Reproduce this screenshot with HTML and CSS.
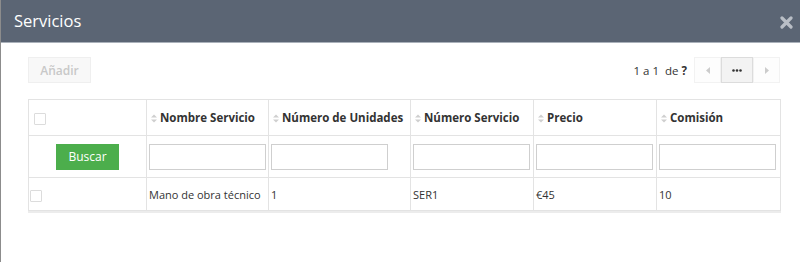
FILE: index.html
```html
<!DOCTYPE html>
<html lang="es">
<head>
    <meta charset="UTF-8">
    <title>Servicios</title>
    <link rel="stylesheet" href="styles.css">
</head>
<body>
<div class="modal-header">
    <h3>Servicios</h3>
    <span class="close-btn">
        <svg width="13" height="13" viewBox="0 0 13 13"><path d="M2 2 L11 11 M11 2 L2 11" stroke="#b9bec6" stroke-width="3.2" stroke-linecap="round"/></svg>
    </span>
</div>

<div class="modal-body">
    <div class="toolbar">
        <button class="add-btn">Añadir</button>
        <div class="pager">
            <span class="pager-info">1 a 1 &nbsp;de <b>?</b></span>
            <button class="pg pg-side">
                <svg width="4" height="7" viewBox="0 0 4 7"><path d="M4 0 L0 3.5 L4 7 Z" fill="#ccc"/></svg>
            </button>
            <button class="pg pg-mid">
                <svg width="10" height="3" viewBox="0 0 10 3"><circle cx="1.5" cy="1.5" r="1.3" fill="#333"/><circle cx="5" cy="1.5" r="1.3" fill="#333"/><circle cx="8.5" cy="1.5" r="1.3" fill="#333"/></svg>
            </button>
            <button class="pg pg-side">
                <svg width="4" height="7" viewBox="0 0 4 7"><path d="M0 0 L4 3.5 L0 7 Z" fill="#ccc"/></svg>
            </button>
        </div>
    </div>

    <table class="grid">
        <colgroup>
            <col style="width:118px">
            <col style="width:122px">
            <col style="width:142px">
            <col style="width:123px">
            <col style="width:123px">
            <col style="width:124px">
        </colgroup>
        <tr class="head-row">
            <th><span class="chk"></span></th>
            <th><svg class="sort" width="6" height="9" viewBox="0 0 6 9"><path d="M0 3.6 L3 0.4 L6 3.6 Z M0 5.4 L3 8.6 L6 5.4 Z" fill="#cfcfcf"/></svg>Nombre Servicio</th>
            <th><svg class="sort" width="6" height="9" viewBox="0 0 6 9"><path d="M0 3.6 L3 0.4 L6 3.6 Z M0 5.4 L3 8.6 L6 5.4 Z" fill="#cfcfcf"/></svg>Número de Unidades</th>
            <th><svg class="sort" width="6" height="9" viewBox="0 0 6 9"><path d="M0 3.6 L3 0.4 L6 3.6 Z M0 5.4 L3 8.6 L6 5.4 Z" fill="#cfcfcf"/></svg>Número Servicio</th>
            <th><svg class="sort" width="6" height="9" viewBox="0 0 6 9"><path d="M0 3.6 L3 0.4 L6 3.6 Z M0 5.4 L3 8.6 L6 5.4 Z" fill="#cfcfcf"/></svg>Precio</th>
            <th><svg class="sort" width="6" height="9" viewBox="0 0 6 9"><path d="M0 3.6 L3 0.4 L6 3.6 Z M0 5.4 L3 8.6 L6 5.4 Z" fill="#cfcfcf"/></svg>Comisión</th>
        </tr>
        <tr class="filter-row">
            <td class="center"><button class="search-btn">Buscar</button></td>
            <td><input type="text"></td>
            <td><input type="text"></td>
            <td><input type="text"></td>
            <td><input type="text"></td>
            <td><input type="text"></td>
        </tr>
        <tr class="data-row">
            <td><span class="chk small"></span></td>
            <td>Mano de obra técnico</td>
            <td>1</td>
            <td>SER1</td>
            <td>€45</td>
            <td>10</td>
        </tr>
    </table>
</div>
</body>
</html>
```

FILE: styles.css
```css
body {
    margin: 0;
    font-family: "Open Sans", Arial, sans-serif;
    background-color: white;
    color: #333;
    border-left: 1px solid #8c8c8c;
    min-height: 262px;
    box-sizing: border-box;
}

.modal-header {
    height: 42px;
    background-color: #5b6574;
    border-bottom: 1px solid #aab1ba;
    display: flex;
    align-items: center;
    justify-content: space-between;
    padding: 0 7px 0 13px;
}

.modal-header h3 {
    margin: 0;
    font-size: 16.5px;
    font-weight: 400;
    color: white;
    padding-bottom: 1px;
}

.close-btn {
    display: flex;
    margin-top: 2px;
}

.modal-body {
    padding: 14px 20px 0 27px;
}

.toolbar {
    display: flex;
    justify-content: space-between;
    align-items: center;
    height: 26px;
    margin-bottom: 16px;
}

.add-btn {
    height: 26px;
    width: 63px;
    background-color: #f8f8f8;
    border: 1px solid #efefef;
    color: #c8c8c8;
    font-family: inherit;
    font-size: 12px;
    font-weight: 600;
    padding: 0;
}

.pager {
    display: flex;
    align-items: center;
    height: 26px;
}

.pager-info {
    font-size: 11.5px;
    color: #333;
    margin-right: 7px;
}

.pager-info b {
    font-weight: 700;
}

.pg {
    height: 26px;
    padding: 0;
    font-family: inherit;
    display: flex;
    align-items: center;
    justify-content: center;
}

.pg-side {
    width: 27px;
    background-color: #fdfdfd;
    border: 1px solid #f2f2f2;
}

.pg-mid {
    width: 32px;
    background-color: #f3f3f3;
    border: 1px solid #dcdcdc;
}

.grid {
    border-collapse: collapse;
    table-layout: fixed;
    width: 752px;
    font-size: 11px;
    box-shadow: 0 2px 0 #ececec;
}

.grid th,
.grid td {
    border: 1px solid #e3e3e3;
    text-align: left;
    padding: 0 2px;
    white-space: nowrap;
    overflow: hidden;
}

.head-row th {
    height: 35px;
    font-size: 11.5px;
    font-weight: 700;
    color: #333;
    padding-left: 4px;
}

.sort {
    margin-right: 3px;
    vertical-align: -1px;
}

.chk {
    display: inline-block;
    width: 10px;
    height: 10px;
    border: 1px solid #dcdcdc;
    border-radius: 1px;
    margin-left: 1px;
    vertical-align: middle;
}

.chk.small {
    margin-left: -1px;
}

.filter-row td {
    height: 41px;
}

.center {
    text-align: center !important;
}

.search-btn {
    width: 63px;
    height: 26px;
    background-color: #4cae4c;
    border: none;
    color: white;
    font-family: inherit;
    font-size: 12px;
    padding: 0;
}

.filter-row input {
    width: 117px;
    height: 26px;
    box-sizing: border-box;
    border: 1px solid #cfcfcf;
    margin: 0;
    display: block;
}

.data-row td {
    height: 32px;
    padding-left: 2px;
}
```
